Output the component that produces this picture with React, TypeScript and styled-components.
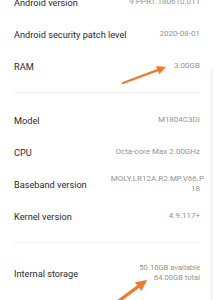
import styled, { createGlobalStyle } from "styled-components"

const GlobalStyle = createGlobalStyle`
  html, body {
    margin: 0;
    padding: 0;
    background: #fff;
    overflow: hidden;
  }
  body {
    font-family: Roboto, "Noto Sans", sans-serif;
  }
`

interface Item {
  label: string
  value: string[]
}

const groups: Item[][] = [
  [
    { label: "Android version", value: ["9 PPR1.180610.011"] },
    { label: "Android security patch level", value: ["2020-08-01"] },
    { label: "RAM", value: ["3.00GB"] },
  ],
  [
    { label: "Model", value: ["M1804C3DI"] },
    { label: "CPU", value: ["Octa-core Max 2.00GHz"] },
    { label: "Baseband version", value: ["MOLY.LR12A.R2.MP.V66.P", "18"] },
    { label: "Kernel version", value: ["4.9.117+"] },
  ],
  [
    { label: "Internal storage", value: ["50.10GB available", "64.00GB total"] },
  ],
]

const Arrow = ({ x1, y1, x2, y2, w = 2.4, head = 9 }: { x1: number, y1: number, x2: number, y2: number, w?: number, head?: number }) => {
  const a = Math.atan2(y2 - y1, x2 - x1)
  const half = head * 0.5
  const bx = x2 - Math.cos(a) * head
  const by = y2 - Math.sin(a) * head
  const px = -Math.sin(a) * half
  const py = Math.cos(a) * half
  return (
    <g>
      <line x1={x1} y1={y1} x2={bx} y2={by} stroke="#f07a2c" strokeWidth={w} strokeLinecap="round" />
      <polygon points={`${x2},${y2} ${bx + px},${by + py} ${bx - px},${by - py}`} fill="#f07a2c" />
    </g>
  )
}

const App = () => {
  return (
    <Page>
      <GlobalStyle />
      <List>
        {groups.map((group, gi) => (
          <Group key={gi} $last={gi === groups.length - 1}>
            {group.map((item) => (
              <Row key={item.label} $tall={gi === 2}>
                <Label>{item.label}</Label>
                <Value $small={gi === 2}>
                  {item.value.map((v, i) => (
                    <Line key={v} $spill={item.value.length > 1 && gi === 1 && i === 0}>{v}</Line>
                  ))}
                </Value>
              </Row>
            ))}
          </Group>
        ))}
      </List>
      <ScrollTrack />
      <Overlay width="214" height="300" viewBox="0 0 214 300">
        <Arrow x1={123} y1={83} x2={166} y2={67} />
        <Arrow x1={116} y1={303} x2={147} y2={280} w={3.2} head={11} />
      </Overlay>
    </Page>
  )
}

export default App

const Page = styled.div`
    position: relative;
    width: 214px;
    height: 300px;
    overflow: hidden;
    background: #fff;
`

const List = styled.div`
    display: flex;
    flex-direction: column;
    margin-top: -14px;
    padding: 0 14px;
`

const Group = styled.div<{ $last: boolean }>`
    display: flex;
    flex-direction: column;
    padding-bottom: ${(p) => (p.$last ? "0" : "10px")};
    margin-bottom: ${(p) => (p.$last ? "0" : "11px")};
    border-bottom: ${(p) => (p.$last ? "none" : "1px solid #f0f0f0")};
`

const Row = styled.div<{ $tall: boolean }>`
    display: flex;
    align-items: center;
    justify-content: space-between;
    height: 32px;
    padding-top: ${(p) => (p.$tall ? "3px" : "0")};
`

const Label = styled.div`
    font-size: 9.2px;
    color: #2a2a2a;
    white-space: nowrap;
`

const Value = styled.div<{ $small: boolean }>`
    font-size: ${(p) => (p.$small ? "7.6px" : "8px")};
    line-height: 10px;
    color: #939393;
    text-align: right;
    white-space: nowrap;
`

const Line = styled.div<{ $spill: boolean }>`
    margin-right: ${(p) => (p.$spill ? "-4px" : "0")};
`

const ScrollTrack = styled.div`
    position: absolute;
    left: 211px;
    top: 70px;
    width: 1px;
    bottom: 0;
    background: #ececec;
`

const Overlay = styled.svg`
    position: absolute;
    left: 0;
    top: 0;
    pointer-events: none;
`
